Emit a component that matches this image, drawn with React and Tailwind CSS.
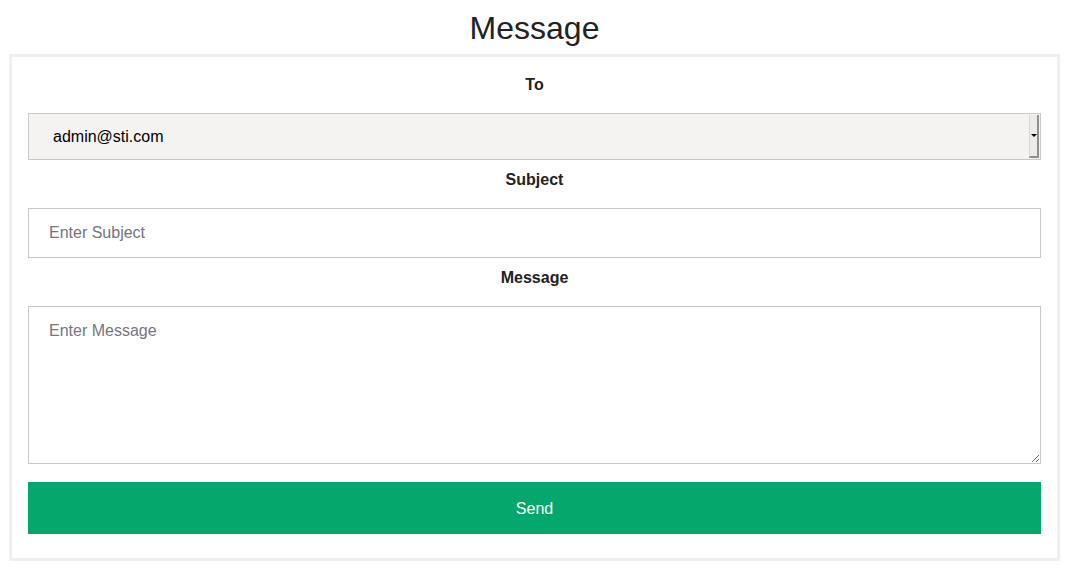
import React from "react";

const font = { fontFamily: '"Liberation Sans", Arial, sans-serif' };

function Label({ children }) {
  return (
    <div className="h-[38px] pt-[2px] leading-[36px] text-center text-[16px] font-bold text-[#222]">
      {children}
    </div>
  );
}

export default function App() {
  return (
    <div className="w-[1069px] h-[583px] bg-white" style={font}>
      <h1 className="h-[54px] flex items-center justify-center text-[32px] text-[#222] pt-[1px]">
        Message
      </h1>

      <div className="mx-[9px] border-[3px] border-[#efefef] px-[16px] pt-[8px] pb-[24px]">
        <Label>To</Label>
        <div className="mt-[10px] h-[47px] flex items-stretch bg-[#f4f3f1] border border-[#c8c8c8]">
          <div className="flex-1 flex items-center pl-[24px] text-[16px] text-black">
            admin@sti.com
          </div>
          <div className="my-[1px] mr-[1px] w-[10px] flex items-center justify-center bg-[#ecebe9] border-l border-[#d6d6d6] border-r-2 border-b-2 border-r-[#8e8e8e] border-b-[#8e8e8e]">
            <div className="w-0 h-0 border-l-[3px] border-r-[3px] border-t-[3px] border-l-transparent border-r-transparent border-t-black" />
          </div>
        </div>

        <Label>Subject</Label>
        <input
          className="mt-[10px] block w-full h-[50px] border border-[#c8c8c8] px-[20px] text-[16px] outline-none placeholder:text-[#757580]"
          placeholder="Enter Subject"
        />

        <Label>Message</Label>
        <textarea
          className="mt-[10px] block w-full h-[158px] border border-[#c8c8c8] px-[20px] pt-[14px] text-[16px] leading-[20px] outline-none placeholder:text-[#757580]"
          placeholder="Enter Message"
        />

        <button className="mt-[18px] block w-full h-[52px] pt-[2px] bg-[#05a76c] text-white text-[16px]">
          Send
        </button>
      </div>
    </div>
  );
}
